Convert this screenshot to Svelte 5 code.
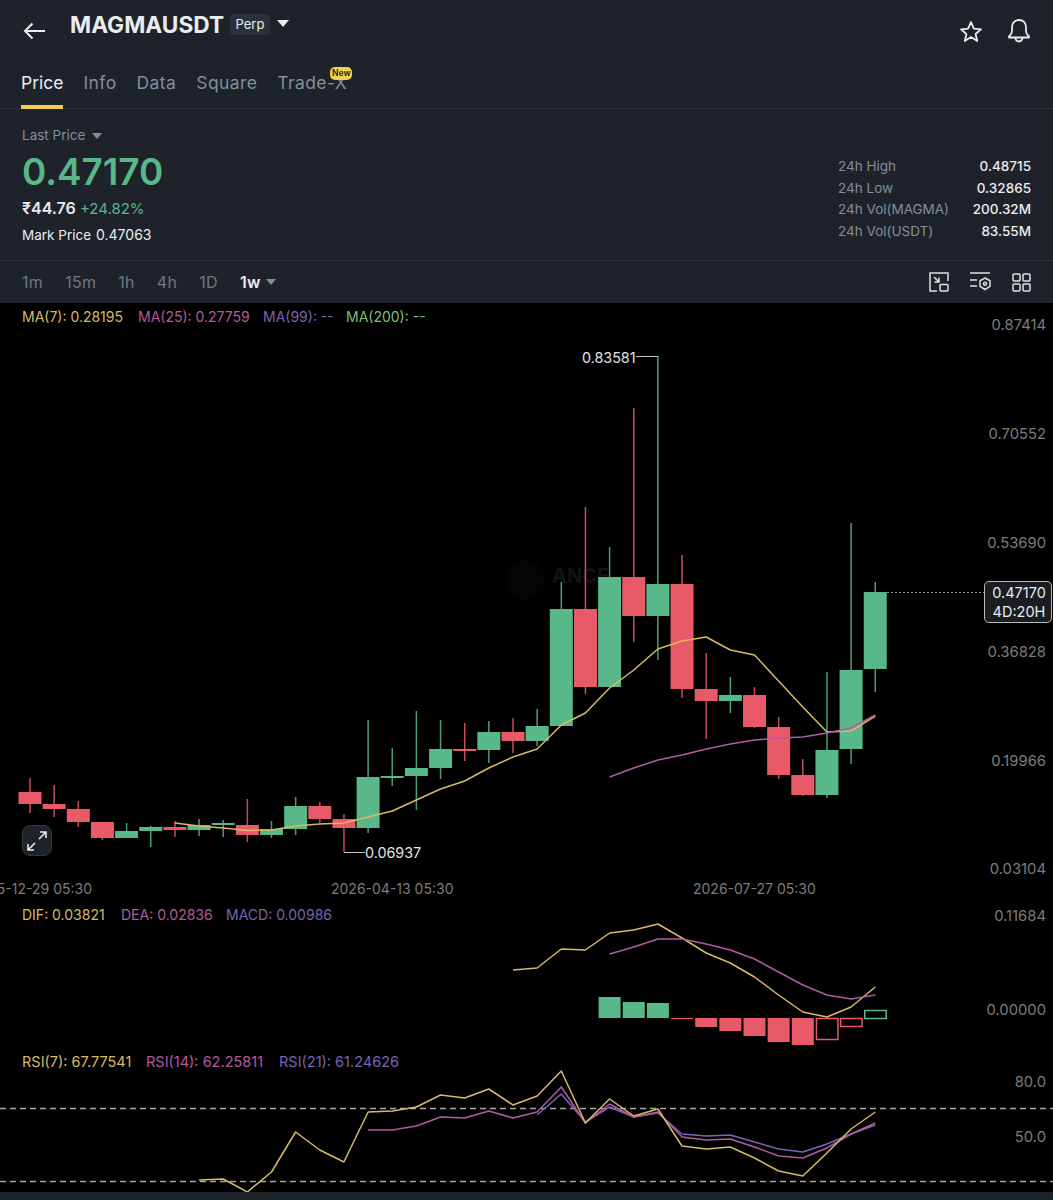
<script>
  const GREEN = '#58b88a'
  const RED = '#e95a68'

  // center x of candle i
  const cx = (i) => 30 + i * 24.15

  // [wickTop, bodyTop, bodyBottom, wickBottom, up]
  const candles = [
    [778, 792, 804, 813, 0], [785, 804, 809, 817, 0], [801, 809, 822, 827, 0], [822, 822, 838, 840, 0],
    [823, 831, 838, 838, 1], [826, 827, 831, 847, 1], [821, 827, 830, 837, 0], [819, 825, 830, 836, 1],
    [820, 823, 825, 837, 1], [799, 825, 835, 842, 0], [821, 829, 835, 838, 1], [797, 806, 829, 835, 1],
    [802, 806, 819, 823, 0], [814, 819, 828, 852, 0], [720, 777, 828, 833, 1], [748, 776, 778, 786, 1],
    [711, 768, 776, 810, 1], [720, 749, 768, 779, 1], [723, 749, 751, 761, 0], [721, 732, 750, 763, 1],
    [718, 732, 741, 753, 0], [709, 726, 741, 746, 1], [582, 609, 726, 726, 1], [507, 609, 687, 694, 0],
    [547, 577, 687, 687, 1], [408, 577, 616, 642, 0], [356, 584, 616, 660, 1], [555, 584, 689, 698, 0],
    [653, 689, 701, 739, 0], [677, 695, 701, 713, 1], [687, 695, 727, 728, 0], [717, 727, 775, 779, 0],
    [759, 775, 795, 796, 0], [672, 750, 795, 798, 1], [523, 670, 749, 764, 1], [582, 592, 669, 692, 1]
  ]

  // line series: first candle index, then y values per candle
  const line = (start, ys) => ys.map((y, i) => `${cx(start + i).toFixed(1)},${y}`).join(' ')

  const ma7 = line(6, [823, 826, 828, 830.5, 830, 826, 824, 823, 817, 811, 800, 789, 781, 768, 757, 749, 725, 713, 688, 670, 649, 641, 637, 650, 655, 681, 707, 732, 731, 716])
  const ma25 = line(24, [777, 768, 760, 755, 749, 744, 740, 738, 737, 733, 728, 715])
  const dif = line(20, [970, 968, 949, 950, 933, 930, 924, 938, 953, 963, 977, 995, 1012, 1017, 1007, 987])
  const dea = line(24, [954, 947, 939, 939, 944, 950, 959, 972, 985, 995, 999, 995])
  const rsi7 = line(7, [1180, 1179, 1192, 1172, 1132, 1150, 1162, 1112, 1111, 1107, 1095, 1098, 1089, 1105, 1096, 1071, 1123, 1099, 1116, 1109, 1146, 1149, 1147, 1158, 1171, 1176, 1153, 1129, 1112])
  const rsi14 = line(14, [1130, 1130, 1126, 1117, 1118, 1111, 1118, 1112, 1087, 1123, 1104, 1117, 1112, 1137, 1140, 1139, 1147, 1156, 1158, 1148, 1134, 1123])
  const rsi21 = line(21, [1115, 1094, 1122, 1107, 1117, 1113, 1134, 1136, 1135, 1142, 1149, 1152, 1144, 1134, 1125])

  // macd histogram, from candle 24 on: [top, bottom, up, hollow]
  const bars = [
    [997, 1018, 1, 0], [1002, 1018, 1, 0], [1003, 1018, 1, 0], [1018, 1019, 0, 0], [1018, 1027, 0, 0], [1018, 1031, 0, 0],
    [1018, 1036, 0, 0], [1018, 1042, 0, 0], [1018, 1045, 0, 0], [1018, 1039, 0, 1], [1018, 1026, 0, 1], [1010, 1018, 1, 1]
  ]

  const axis = [
    ['0.87414', 324], ['0.70552', 433], ['0.53690', 542], ['0.36828', 651], ['0.19966', 760], ['0.03104', 868],
    ['0.11684', 915], ['0.00000', 1009], ['80.0', 1081], ['50.0', 1136]
  ]

  const legends = [
    { y: 316.5, size: '', items: [[22, 'MA(7): 0.28195', 'y'], [138, 'MA(25): 0.27759', 'p'], [263, 'MA(99): --', 'v'], [346, 'MA(200): --', 'g']] },
    { y: 915, size: '', items: [[22, 'DIF: 0.03821', 'y'], [121, 'DEA: 0.02836', 'p'], [226, 'MACD: 0.00986', 'v']] },
    { y: 1062, size: 'wide', items: [[22, 'RSI(7): 67.77541', 'y'], [146, 'RSI(14): 62.25811', 'p'], [279, 'RSI(21): 61.24626', 'v']] }
  ]

  const tabs = ['Price', 'Info', 'Data', 'Square', 'Trade-X']
  const intervals = ['1m', '15m', '1h', '4h', '1D']
  const stats = [
    ['24h High', '0.48715'],
    ['24h Low', '0.32865'],
    ['24h Vol(MAGMA)', '200.32M'],
    ['24h Vol(USDT)', '83.55M']
  ]
</script>

<div class="page">
  <header class="topbar">
    <svg class="back" width="24" height="20" viewBox="0 0 24 20" fill="none" stroke="#eaecef" stroke-width="2">
      <path d="M23 10H3M10.500 2.500 3 10l7.500 7.500" />
    </svg>
    <span class="symbol">MAGMAUSDT</span>
    <span class="perp">Perp</span>
    <span class="caret big"></span>
    <span class="spacer"></span>
    <svg class="star" width="24" height="24" viewBox="0 0 24 24" fill="none" stroke="#eaecef" stroke-width="1.800" stroke-linejoin="round">
      <path d="M12 2l2.900 6.600 7.100.7-5.400 4.700 1.600 7L12 17l-6.200 4 1.600-7L2 9.300l7.100-.7z" />
    </svg>
    <svg class="bell" width="24" height="26" viewBox="0 0 24 26" fill="none" stroke="#eaecef" stroke-width="1.800" stroke-linejoin="round">
      <path d="M12 2c-4.500 0-7 3.300-7 7.500v4c0 2-1.500 3.500-3 5v1h20v-1c-1.500-1.500-3-3-3-5v-4C19 5.300 16.500 2 12 2z" />
      <path d="M8.500 20c.3 2.200 1.700 3.500 3.500 3.500s3.200-1.300 3.500-3.500" />
    </svg>
  </header>

  <nav class="tabs">
    {#each tabs as tab, i}
      <span class="tab" class:active={i === 0}>
        {tab}
        {#if tab === 'Trade-X'}<span class="new">New</span>{/if}
      </span>
    {/each}
  </nav>

  <section class="summary">
    <div class="left">
      <div class="last">Last Price <span class="caret"></span></div>
      <div class="price">0.47170</div>
      <div class="fiat"><b>₹44.76</b> <span>+24.82%</span></div>
      <div class="mark">Mark Price<span>0.47063</span></div>
    </div>
    <div class="stats">
      {#each stats as [label, value]}
        <div class="stat"><span>{label}</span><b>{value}</b></div>
      {/each}
    </div>
  </section>

  <section class="intervals">
    {#each intervals as item}
      <span>{item}</span>
    {/each}
    <span class="current">1w</span>
    <span class="caret"></span>
    <span class="spacer"></span>
    <div class="tools">
      <svg width="20" height="20" viewBox="0 0 20 20" fill="none" stroke="#dfe2e6" stroke-width="1.500">
        <path d="M8 19H1V1h18v8" />
        <rect x="11" y="12.500" width="8" height="6.500" rx="1" />
        <path d="M5 5l5 5M10 5.500V10H5.500" />
      </svg>
      <svg width="21" height="20" viewBox="0 0 21 20" fill="none" stroke="#dfe2e6" stroke-width="1.500">
        <path d="M0 1h20M0 8h7M0 14h7" />
        <path d="M15 6l5 2.800v5.600L15 17.500l-5-3.100V8.800z" />
        <circle cx="15" cy="11.700" r="1.500" />
      </svg>
      <svg width="19" height="19" viewBox="0 0 19 19" fill="none" stroke="#dfe2e6" stroke-width="1.500">
        <rect x="1" y="1" width="7" height="7" rx="1" />
        <rect x="11" y="1" width="7" height="7" rx="1" />
        <rect x="1" y="11" width="7" height="7" rx="1" />
        <rect x="11" y="11" width="7" height="7" rx="1" />
      </svg>
    </div>
  </section>

  <div class="chart">
    <svg width="1053" height="889" viewBox="0 303 1053 889">
      <!-- watermark -->
      <circle cx="525" cy="580" r="20" fill="#040405" />
      <text class="mark-text" x="552" y="583">ANCE</text>

      {#each candles as [wt, bt, bb, wb, up], i}
        <rect x={cx(i) - 0.75} y={wt} width="1.500" height={wb - wt} fill={up ? GREEN : RED} opacity="0.85" />
        <rect x={cx(i) - 11.500} y={bt} width="23" height={Math.max(bb - bt, 1.500)} fill={up ? GREEN : RED} />
      {/each}

      <polyline class="line" stroke="#d9b964" points={ma7} />
      <polyline class="line" stroke="#b45aa2" points={ma25} />

      <!-- high / low marks -->
      <path d="M636 356.500H658" stroke="#c9c9c9" fill="none" />
      <text class="mark-label" x="582" y="363">0.83581</text>
      <path d="M344 852.500H365" stroke="#c9c9c9" fill="none" />
      <text class="mark-label" x="365" y="858">0.06937</text>

      <!-- last price -->
      <path d="M887 592.500H984" stroke="#9a9a9a" stroke-dasharray="2 2" fill="none" />

      {#each bars as [top, bottom, up, hollow], i}
        {#if hollow}
          <rect x={cx(24 + i) - 10.500} y={top + 0.5} width="21.500" height={bottom - top} fill="none" stroke={up ? GREEN : RED} stroke-width="1.500" />
        {:else}
          <rect x={cx(24 + i) - 11} y={top} width="22" height={bottom - top} fill={up ? GREEN : RED} />
        {/if}
      {/each}
      <polyline class="line" stroke="#d9b964" points={dif} />
      <polyline class="line" stroke="#b45aa2" points={dea} />

      <path class="dash" d="M0 1108.500H1053M0 1181.500H1053" />
      <polyline class="line" stroke="#7a64b4" points={rsi21} />
      <polyline class="line" stroke="#b45aa2" points={rsi14} />
      <polyline class="line" stroke="#d9b964" points={rsi7} />

      {#each legends as row}
        {#each row.items as [x, label, tone]}
          <text class="legend {tone} {row.size}" {x} y={row.y + 5}>{label}</text>
        {/each}
      {/each}

      {#each axis as [label, y]}
        <text class="axis" x="1046" y={y + 5.5} text-anchor="end">{label}</text>
      {/each}

      <text class="date" x="92" y="893.500" text-anchor="end">2025-12-29 05:30</text>
      <text class="date" x="331" y="893.500">2026-04-13 05:30</text>
      <text class="date" x="693" y="893.500">2026-07-27 05:30</text>
    </svg>

    <div class="tag"><span>0.47170</span><span>4D:20H</span></div>

    <button class="expand" aria-label="Expand chart">
      <svg width="22" height="22" viewBox="0 0 22 22" fill="none" stroke="#eaecef" stroke-width="1.600">
        <path d="M13 9l7-7M14 2h6v6M9 13l-7 7M2 14v6h6" />
      </svg>
    </button>
  </div>
  <div class="foot"></div>
</div>

<style>
  :global(body) {
    margin: 0;
    background: #1e2329;
  }

  .page {
    width: 1053px;
    height: 1200px;
    overflow: hidden;
    background: #1e2329;
    font-family: Inter, "Noto Sans", sans-serif;
    color: #eaecef;
  }

  .spacer {
    flex: 1;
  }

  .caret {
    display: inline-block;
    width: 0;
    height: 0;
    border-left: 5.500px solid transparent;
    border-right: 5.500px solid transparent;
    border-top: 6.500px solid #848e9c;
  }

  .caret.big {
    border-left-width: 6px;
    border-right-width: 6px;
    border-top: 7px solid #eaecef;
    margin: -16px 0 0 7px;
  }

  .topbar {
    height: 62px;
    display: flex;
    align-items: center;
    padding: 0 22px;
    box-sizing: border-box;
  }

  .symbol {
    margin: -14px 0 0 24px;
    font-size: 22.700px;
    font-weight: 700;
  }

  .perp {
    margin: -14px 0 0 6px;
    padding: 2px 5.500px;
    height: 17px;
    line-height: 17px;
    border-radius: 4px;
    background: #2b3139;
    font-size: 13px;
  }

  .star {
    margin-top: 2px;
  }

  .bell {
    margin-left: 24px;
  }

  .tabs {
    height: 47px;
    display: flex;
    gap: 20px;
    padding: 0 21px;
    border-bottom: 1px solid #2b3037;
    box-sizing: border-box;
  }

  .tab {
    position: relative;
    height: 47px;
    box-sizing: border-box;
    padding-top: 10px;
    font-size: 17.500px;
    letter-spacing: 0.4px;
    color: #848e9c;
  }

  .tab.active {
    color: #eaecef;
    letter-spacing: 0;
    border-bottom: 4px solid #f0cf4b;
  }

  .new {
    position: absolute;
    left: 53px;
    top: 5px;
    width: 22px;
    height: 13px;
    line-height: 13px;
    text-align: center;
    border-radius: 5px;
    background: #f0cf4b;
    color: #1e2329;
    font-size: 8.500px;
    letter-spacing: 0;
    font-weight: 600;
  }

  .summary {
    height: 152px;
    display: flex;
    justify-content: space-between;
    padding: 0 22px;
    box-sizing: border-box;
    border-bottom: 1px solid #2b3037;
  }

  .last {
    margin-top: 18px;
    height: 16px;
    line-height: 16px;
    font-size: 13.500px;
    color: #848e9c;
  }

  .last .caret {
    margin-left: 3px;
    vertical-align: 1px;
  }

  .price {
    margin-top: 9px;
    height: 40px;
    line-height: 40px;
    font-size: 36.800px;
    font-weight: 600;
    color: #58b88a;
  }

  .fiat {
    margin-top: 6px;
    height: 20px;
    line-height: 20px;
    font-size: 15px;
    color: #58b88a;
  }

  .fiat b {
    font-size: 16px;
    font-weight: 600;
    color: #eaecef;
  }

  .mark {
    margin-top: 8px;
    height: 18px;
    line-height: 18px;
    font-size: 13.500px;
  }

  .mark span {
    margin-left: 5px;
    font-size: 14px;
  }

  .stats {
    margin-top: 47px;
    width: 193px;
  }

  .stat {
    display: flex;
    justify-content: space-between;
    height: 21.500px;
    line-height: 21.500px;
    font-size: 13.500px;
    color: #848e9c;
  }

  .stat b {
    font-weight: 500;
    color: #eaecef;
  }

  .intervals {
    height: 42px;
    display: flex;
    align-items: center;
    gap: 22px;
    padding: 0 22px;
    box-sizing: border-box;
    font-size: 16px;
    letter-spacing: 0.3px;
    color: #6f7782;
  }

  .intervals .current {
    color: #eaecef;
    font-weight: 600;
  }

  .intervals .caret {
    margin-left: -17px;
  }

  .tools {
    display: flex;
    align-items: center;
    gap: 21px;
  }

  .chart {
    position: relative;
    width: 1053px;
    height: 889px;
    background: #000;
  }

  .chart > svg {
    display: block;
  }

  .line {
    fill: none;
    stroke-width: 1.500;
    stroke-linejoin: round;
  }

  .dash {
    fill: none;
    stroke: #a8a8a8;
    stroke-width: 1.500;
    stroke-dasharray: 6 4;
  }

  text {
    font-family: Inter, "Noto Sans", sans-serif;
  }

  .legend {
    font-size: 14px;
  }

  .legend.wide {
    font-size: 14.500px;
  }

  .y { fill: #d9b964; }
  .p { fill: #b45aa2; }
  .v { fill: #7a64b4; }
  .g { fill: #7fbf7a; }

  .axis {
    font-size: 14.800px;
    fill: #7c7c7c;
  }

  .date {
    font-size: 14px;
    fill: #7c7c7c;
  }

  .mark-label {
    font-size: 14.300px;
    fill: #e4e4e4;
  }

  .mark-text {
    font-size: 20px;
    font-weight: 700;
    fill: #131315;
  }

  .tag {
    position: absolute;
    left: 984px;
    top: 278px;
    width: 68px;
    height: 42px;
    box-sizing: border-box;
    border: 1px solid #bcbcbc;
    border-radius: 5px;
    padding-left: 2px;
    background: #1a1d21;
    display: flex;
    flex-direction: column;
    align-items: center;
    justify-content: center;
    font-size: 14.500px;
    line-height: 19px;
    color: #eaecef;
  }

  .expand {
    position: absolute;
    left: 22px;
    top: 522px;
    width: 30px;
    height: 31px;
    padding: 0;
    display: flex;
    align-items: center;
    justify-content: center;
    border: 1px solid #33373e;
    border-radius: 8px;
    background: #1e2329;
  }

  .foot {
    height: 8px;
    background: #1e2329;
  }
</style>
